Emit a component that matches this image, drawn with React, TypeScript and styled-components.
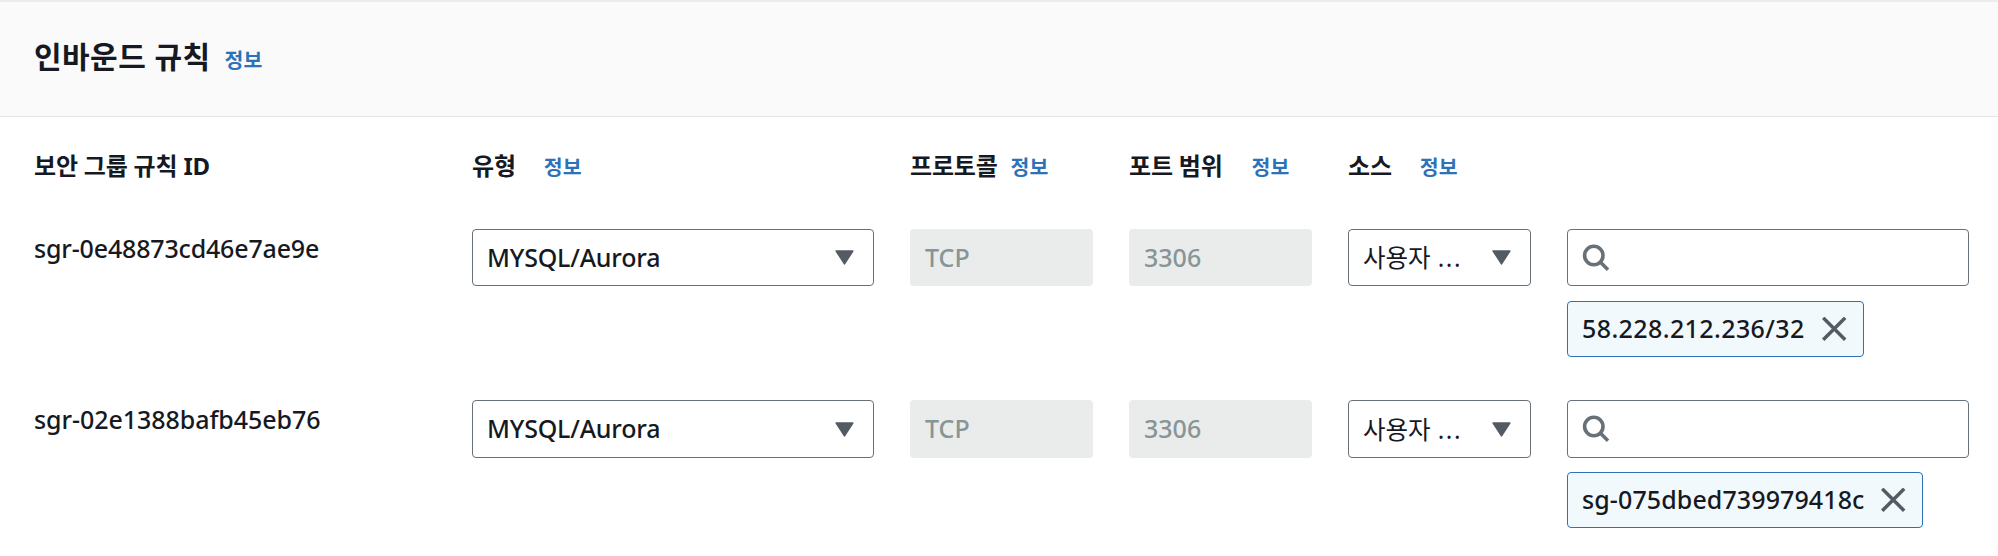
import React from 'react';
import styled, { createGlobalStyle } from 'styled-components';

const GlobalStyle = createGlobalStyle`
  *, *::before, *::after { box-sizing: border-box; }
  body {
    margin: 0;
    background: #ffffff;
    color: #16191f;
    font-family: 'Noto Sans', 'Noto Sans CJK KR', sans-serif;
    font-size: 25px;
    font-weight: 500;
  }
`;

const Panel = styled.section`
  display: flex;
  flex-direction: column;
  width: 1998px;
  height: 556px;
  background: #ffffff;
  overflow: hidden;

  > * {
    flex-shrink: 0;
  }
`;

const PanelHeader = styled.header`
  display: flex;
  align-items: baseline;
  height: 117px;
  padding: 33px 34px 0;
  background: #fafafa;
  border-top: 2px solid #eaeded;
  border-bottom: 1px solid #e4e7e7;
`;

const Title = styled.h2`
  margin: 0;
  font-size: 30px;
  line-height: 44px;
  font-weight: 700;
  letter-spacing: 0.45px;
  white-space: nowrap;
`;

const InfoLink = styled.a<{ $gap: number }>`
  margin-left: ${(p) => p.$gap}px;
  color: #2d72b8;
  font-size: 20.5px;
  line-height: 30px;
  font-weight: 700;
  letter-spacing: 0;
  white-space: nowrap;
`;

const Row = styled.div`
  display: grid;
  grid-template-columns: 402px 402px 183px 183px 183px 402px;
  column-gap: 36px;
  padding: 0 29px 0 34px;
`;

const HeadRow = styled(Row)`
  height: 112px;
  padding-top: 31px;
`;

const RuleRow = styled(Row)`
  height: 171px;
`;

const HeadCell = styled.div`
  display: flex;
  align-items: baseline;
  height: 36px;
  font-size: 24px;
  line-height: 36px;
  font-weight: 700;
  letter-spacing: -0.2px;
  white-space: nowrap;
`;

const RuleId = styled.div<{ $spacing: number }>`
  padding-top: 1px;
  line-height: 36px;
  letter-spacing: ${(p) => p.$spacing}px;
  white-space: nowrap;
`;

const Select = styled.div<{ $height: number }>`
  display: flex;
  align-items: center;
  justify-content: space-between;
  height: ${(p) => p.$height}px;
  padding: 0 19px 0 14px;
  border: 1px solid #687078;
  border-radius: 4px;
  white-space: nowrap;
`;

const LatinValue = styled.span`
  padding-bottom: 2px;
  letter-spacing: -0.2px;
`;

const Ellipsis = styled.span`
  margin-left: 7px;
  letter-spacing: 1.6px;
`;

const KoreanValue = styled.span`
  padding-bottom: 2px;
  font-size: 24.5px;
  font-weight: 400;
`;

const DisabledField = styled.div<{ $height: number }>`
  display: flex;
  align-items: center;
  height: ${(p) => p.$height}px;
  padding: 0 15px 2px;
  border-radius: 4px;
  background: #eaecec;
  color: #879596;
`;

const SourceCell = styled.div`
  display: flex;
  flex-direction: column;
  align-items: flex-start;
  justify-content: space-between;
  height: 128px;
`;

const SearchField = styled.div<{ $height: number }>`
  display: flex;
  align-items: center;
  width: 100%;
  height: ${(p) => p.$height}px;
  padding: 0 14px;
  border: 1px solid #687078;
  border-radius: 4px;
`;

const Token = styled.div<{ $width: number; $spacing: number }>`
  display: flex;
  align-items: center;
  justify-content: space-between;
  width: ${(p) => p.$width}px;
  height: 56px;
  padding: 0 16px 0 14px;
  border: 1px solid #2d72b8;
  border-radius: 4px;
  background: #f2f9fd;
  letter-spacing: ${(p) => p.$spacing}px;
  white-space: nowrap;
`;

const TokenLabel = styled.span`
  padding-bottom: 2px;
`;

const Caret = () => (
  <svg width="19" height="15" viewBox="0 0 19 15" aria-hidden="true">
    <path d="M1.2 1H17.8L9.5 13.8Z" fill="#545b64" stroke="#545b64" strokeWidth="1.6" strokeLinejoin="round" />
  </svg>
);

const SearchIcon = () => (
  <svg width="28" height="28" viewBox="0 0 28 28" fill="none" stroke="#687078" strokeWidth="3.6" aria-hidden="true">
    <circle cx="11.8" cy="11.5" r="9.2" />
    <path d="M18 17.8L26 25.8" />
  </svg>
);

const CloseIcon = () => (
  <svg width="25" height="24" viewBox="0 0 25 24" fill="none" stroke="#545b64" strokeWidth="3.5" aria-hidden="true">
    <path d="M1.2 0.8L23.2 22.8M23.2 0.8L1.2 22.8" />
  </svg>
);

interface Column {
  label: string;
  gap?: number;
}

const columns: Column[] = [
  { label: '보안 그룹 규칙 ID' },
  { label: '유형', gap: 28 },
  { label: '프로토콜', gap: 13 },
  { label: '포트 범위', gap: 29 },
  { label: '소스', gap: 28 },
];

const rules = [
  { id: 'sgr-0e48873cd46e7ae9e', idSpacing: -0.17, height: 57, source: '58.228.212.236/32', width: 297, spacing: 0.4 },
  { id: 'sgr-02e1388bafb45eb76', idSpacing: -0.06, height: 58, source: 'sg-075dbed739979418c', width: 356, spacing: 0.1 },
];

export default function App() {
  return (
    <>
      <GlobalStyle />
      <Panel>
        <PanelHeader>
          <Title>인바운드 규칙</Title>
          <InfoLink $gap={14}>정보</InfoLink>
        </PanelHeader>
        <HeadRow>
          {columns.map((c) => (
            <HeadCell key={c.label}>
              {c.label}
              {c.gap !== undefined && <InfoLink $gap={c.gap}>정보</InfoLink>}
            </HeadCell>
          ))}
        </HeadRow>
        {rules.map((r) => (
          <RuleRow key={r.id}>
            <RuleId $spacing={r.idSpacing}>{r.id}</RuleId>
            <Select $height={r.height}>
              <LatinValue>MYSQL/Aurora</LatinValue>
              <Caret />
            </Select>
            <DisabledField $height={r.height}>TCP</DisabledField>
            <DisabledField $height={r.height}>3306</DisabledField>
            <Select $height={r.height}>
              <KoreanValue>
                사용자<Ellipsis>...</Ellipsis>
              </KoreanValue>
              <Caret />
            </Select>
            <SourceCell>
              <SearchField $height={r.height}>
                <SearchIcon />
              </SearchField>
              <Token $width={r.width} $spacing={r.spacing}>
                <TokenLabel>{r.source}</TokenLabel>
                <CloseIcon />
              </Token>
            </SourceCell>
          </RuleRow>
        ))}
      </Panel>
    </>
  );
}
